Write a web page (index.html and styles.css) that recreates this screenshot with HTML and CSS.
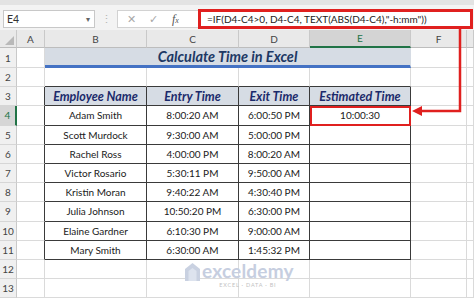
FILE: index.html
```html
<!DOCTYPE html>
<html lang="en">
<head>
    <meta charset="UTF-8">
    <title>Calculate Time in Excel</title>
    <link rel="stylesheet" href="styles.css">
</head>
<body>

    <div class="topstrip"></div>

    <!-- Formula Bar -->
    <div class="fbar">
        <div class="namebox"><span>E4</span><span class="caret">&#9662;</span></div>
        <div class="sep">&#8942;</div>
        <div class="tools">
            <span class="tool">&#10005;</span>
            <span class="tool">&#10003;</span>
            <span class="fx">f<small>x</small></span>
        </div>
        <div class="formula">=IF(D4-C4&gt;0, D4-C4, TEXT(ABS(D4-C4),"-h:mm"))</div>
    </div>

    <!-- Worksheet -->
    <table class="grid">
        <colgroup>
            <col style="width:17px"><col style="width:28px"><col style="width:102px"><col style="width:92px">
            <col style="width:71px"><col style="width:101px"><col style="width:56px"><col style="width:7px">
        </colgroup>
        <tr class="head">
            <td class="corner"><span class="tri"></span></td>
            <td class="ch">A</td><td class="ch">B</td><td class="ch">C</td><td class="ch">D</td>
            <td class="ch on">E</td><td class="ch">F</td><td class="ch"></td>
        </tr>
        <tr>
            <td class="rh">1</td><td></td>
            <td class="title" colspan="4">Calculate Time in Excel</td>
            <td></td><td></td>
        </tr>
        <tr>
            <td class="rh">2</td><td></td>
            <td class="et"></td><td class="et"></td><td class="et"></td><td class="et"></td>
            <td></td><td></td>
        </tr>
        <tr>
            <td class="rh">3</td><td class="el"></td>
            <td class="t th">Employee Name</td><td class="t th">Entry Time</td><td class="t th">Exit Time</td><td class="t th">Estimated Time</td>
            <td></td><td></td>
        </tr>
        <tr>
            <td class="rh sel">4</td><td class="el"></td>
            <td class="t">Adam Smith</td><td class="t">8:00:20 AM</td><td class="t">6:00:50 PM</td><td class="t hl">10:00:30</td>
            <td></td><td></td>
        </tr>
        <tr>
            <td class="rh">5</td><td class="el"></td>
            <td class="t">Scott Murdock</td><td class="t">9:30:00 AM</td><td class="t">5:00:00 PM</td><td class="t"></td>
            <td></td><td></td>
        </tr>
        <tr>
            <td class="rh">6</td><td class="el"></td>
            <td class="t">Rachel Ross</td><td class="t">4:00:00 PM</td><td class="t">8:00:20 AM</td><td class="t"></td>
            <td></td><td></td>
        </tr>
        <tr>
            <td class="rh">7</td><td class="el"></td>
            <td class="t">Victor Rosario</td><td class="t">5:30:11 PM</td><td class="t">9:50:00 AM</td><td class="t"></td>
            <td></td><td></td>
        </tr>
        <tr>
            <td class="rh">8</td><td class="el"></td>
            <td class="t">Kristin Moran</td><td class="t">9:40:22 AM</td><td class="t">4:30:40 PM</td><td class="t"></td>
            <td></td><td></td>
        </tr>
        <tr>
            <td class="rh">9</td><td class="el"></td>
            <td class="t">Julia Johnson</td><td class="t">10:50:20 PM</td><td class="t">6:30:00 PM</td><td class="t"></td>
            <td></td><td></td>
        </tr>
        <tr>
            <td class="rh">10</td><td class="el"></td>
            <td class="t">Elaine Gardner</td><td class="t">6:10:30 PM</td><td class="t">9:00:00 AM</td><td class="t"></td>
            <td></td><td></td>
        </tr>
        <tr>
            <td class="rh">11</td><td class="el"></td>
            <td class="t">Mary Smith</td><td class="t">6:30:00 AM</td><td class="t">1:45:32 PM</td><td class="t"></td>
            <td></td><td></td>
        </tr>
        <tr>
            <td class="rh">12</td><td></td><td></td><td></td><td></td><td></td><td></td><td></td>
        </tr>
        <tr>
            <td class="rh">13</td><td></td><td></td><td></td><td></td><td></td><td></td><td></td>
        </tr>
    </table>

    <!-- Watermark -->
    <div class="logo">
        <svg width="17" height="20" viewBox="0 0 17 20">
            <polygon points="8.5,1 16,7 16,19 1,19 1,7" fill="#c9d1e1"/>
            <polygon points="8.5,6 12.5,9 12.5,19 4.5,19 4.5,9" fill="#dde3ee"/>
        </svg>
        <div class="brand">
            <span class="name">exceldemy</span>
            <span class="tag">EXCEL · DATA · BI</span>
        </div>
    </div>

    <!-- Callout arrow -->
    <svg class="callout" width="474" height="299" viewBox="0 0 474 299">
        <polyline points="460,28 460,111 420,111" fill="none" stroke="#e0201f" stroke-width="2.5"/>
        <polygon points="412,111 422,106 422,116" fill="#e0201f"/>
    </svg>

</body>
</html>
```

FILE: styles.css
```css
* { margin: 0; padding: 0; box-sizing: border-box; }
body {
    width: 474px; height: 299px; overflow: hidden; position: relative;
    background: #fff; font-family: Lato, 'Liberation Sans', sans-serif; color: #222;
}

/* Formula Bar */
.topstrip { height: 5px; background: #e3e3e3; }
.fbar { height: 25px; background: #f3f3f3; display: flex; align-items: flex-start; padding: 4px 0 0 3px; }
.namebox {
    width: 92px; height: 18px; margin-top: 1px; background: #fff; border: 1px solid #c8c8c8;
    display: flex; align-items: center; justify-content: space-between; padding: 0 4px 0 3px;
    font-size: 10.5px; color: #333;
}
.namebox .caret { font-size: 8px; color: #666; }
.sep { width: 22px; text-align: center; color: #b5b5b5; font-size: 11px; line-height: 19px; }
.tools {
    width: 81px; height: 18px; margin-top: 1px; background: #fff; border: 1px solid #d2d2d2; border-right: none;
    display: flex; align-items: center; padding-left: 9px; gap: 13px; color: #a8a8a8; font-size: 11px;
}
.tools .fx { font-family: 'Liberation Serif', serif; font-style: italic; color: #555; font-size: 12px; margin-left: 1px; }
.tools .fx small { font-size: 8px; }
.formula {
    width: 275px; height: 20px; background: #fff; border: 3px solid #e0201f;
    font-size: 10px; line-height: 14px; padding-left: 6px; color: #222; white-space: nowrap;
}

/* Worksheet */
.grid { border-spacing: 0; table-layout: fixed; width: 474px; }
.grid td {
    height: 19.2px; padding: 0; border-right: 1px solid #dadada; border-bottom: 1px solid #dadada;
    font-size: 10px; text-align: center; white-space: nowrap; overflow: hidden;
}
.grid .head td { height: 18px; }
.grid td.ch { background: #e9e9e9; border-right: 1px solid #c9c9c9; border-bottom: 1px solid #bdbdbd; color: #444; font-size: 10px; }
.grid td.ch.on { background: #d4d4d4; border-bottom: 2px solid #217346; color: #217346; }
.grid td.corner { background: #e9e9e9; border-right: 1px solid #c9c9c9; border-bottom: 1px solid #bdbdbd; position: relative; }
.corner .tri {
    position: absolute; right: 2px; bottom: 2px; width: 0; height: 0;
    border-left: 9px solid transparent; border-bottom: 9px solid #b9b9b9;
}
.grid td.rh { background: #f0f0f0; border-right: 1px solid #c9c9c9; border-bottom: 1px solid #d6d6d6; color: #444; font-size: 10px; }
.grid td.rh.sel { background: #d6d6d6; border-right: 2px solid #217346; color: #217346; }

/* Table region */
.grid td.title {
    background: #d6dce4; border-bottom: 3px solid #4472c4; border-right: 1px solid #d6dce4;
    color: #203864; font-weight: bold; font-style: italic; font-size: 14.5px;
}
.grid td.el { border-right: 1px solid #3a3a3a; }
.grid td.et { border-bottom: 1px solid #3a3a3a; }
.grid td.t { border-right: 1px solid #3a3a3a; border-bottom: 1px solid #3a3a3a; color: #1a1a1a; }
.grid td.th { background: #d6dce4; color: #1b2a6b; font-weight: bold; font-style: italic; font-size: 12.5px; }
.grid td.hl { outline: 2.5px solid #e0201f; outline-offset: -2px; }

/* Watermark */
.logo { position: absolute; left: 184px; top: 262px; display: flex; align-items: flex-start; gap: 1px; }
.brand { display: flex; flex-direction: column; align-items: center; }
.brand .name { font-size: 19px; line-height: 17px; font-weight: bold; color: #c6cee0; letter-spacing: 0.2px; }
.brand .tag { font-size: 5.5px; line-height: 6px; color: #c2c2c2; letter-spacing: 0.8px; margin-top: 3px; }

/* Callout */
.callout { position: absolute; left: 0; top: 0; pointer-events: none; }
```
